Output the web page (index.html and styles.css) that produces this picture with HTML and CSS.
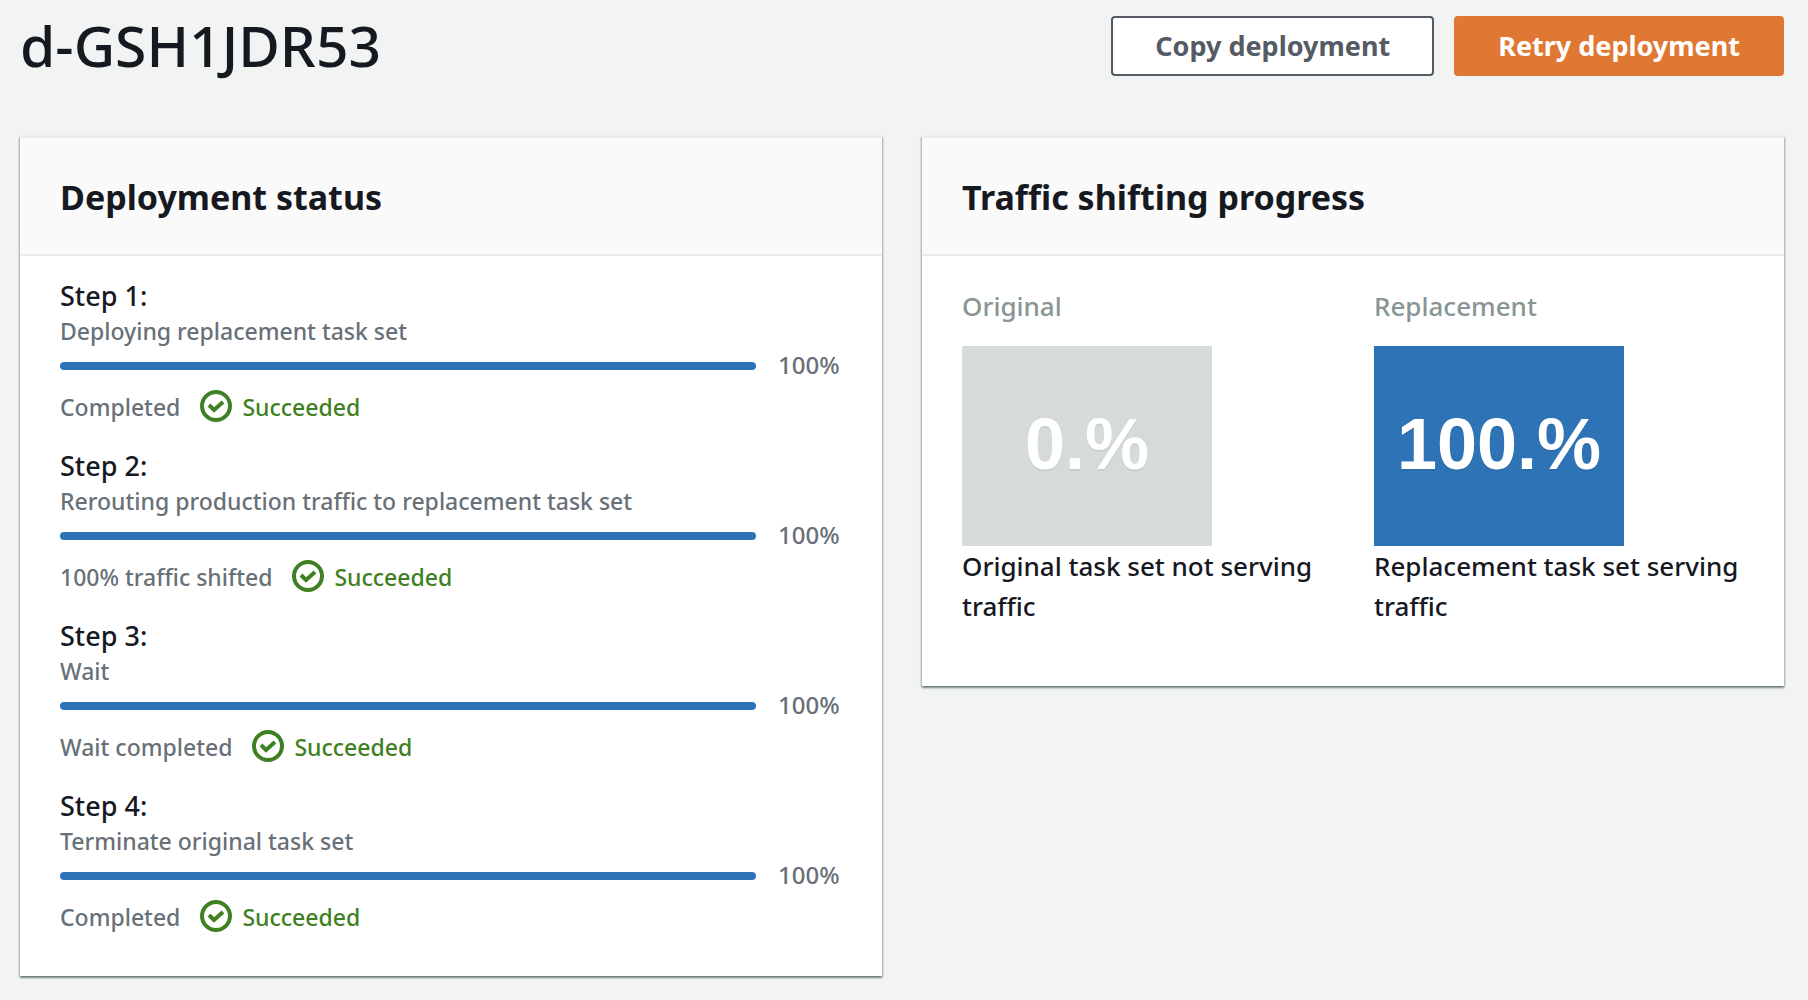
FILE: index.html
```html
<!DOCTYPE html>
<html lang="en">
<head>
<meta charset="utf-8">
<meta name="viewport" content="width=device-width, initial-scale=1">
<title>d-GSH1JDR53</title>
<link rel="stylesheet" href="styles.css">
</head>
<body>
<svg class="sprite" aria-hidden="true">
  <symbol id="icon-success" viewBox="0 0 32 32">
    <circle cx="16" cy="16" r="14" fill="none" stroke="currentColor" stroke-width="4"/>
    <path d="M9 15l5 5 9-8" fill="none" stroke="currentColor" stroke-width="4"/>
  </symbol>
</svg>
<main class="page">
  <header class="page-header">
    <h1 class="page-title">d-GSH1JDR53</h1>
    <div class="actions">
      <button class="button" type="button">Copy deployment</button>
      <button class="button button-primary" type="button">Retry deployment</button>
    </div>
  </header>
  <div class="cards">
    <section class="card">
      <header class="card-header"><h2 class="card-title">Deployment status</h2></header>
      <div class="card-body">
        <div class="step">
          <h3 class="step-title">Step 1:</h3>
          <label class="step-name" for="step-1">Deploying replacement task set</label>
          <div class="step-progress"><progress class="bar" id="step-1" value="100" max="100"></progress><span class="percent">100%</span></div>
          <div class="step-status"><span>Completed</span><span class="success"><svg class="icon" aria-hidden="true"><use href="#icon-success"/></svg>Succeeded</span></div>
        </div>
        <div class="step">
          <h3 class="step-title">Step 2:</h3>
          <label class="step-name" for="step-2">Rerouting production traffic to replacement task set</label>
          <div class="step-progress"><progress class="bar" id="step-2" value="100" max="100"></progress><span class="percent">100%</span></div>
          <div class="step-status"><span>100% traffic shifted</span><span class="success"><svg class="icon" aria-hidden="true"><use href="#icon-success"/></svg>Succeeded</span></div>
        </div>
        <div class="step">
          <h3 class="step-title">Step 3:</h3>
          <label class="step-name" for="step-3">Wait</label>
          <div class="step-progress"><progress class="bar" id="step-3" value="100" max="100"></progress><span class="percent">100%</span></div>
          <div class="step-status"><span>Wait completed</span><span class="success"><svg class="icon" aria-hidden="true"><use href="#icon-success"/></svg>Succeeded</span></div>
        </div>
        <div class="step">
          <h3 class="step-title">Step 4:</h3>
          <label class="step-name" for="step-4">Terminate original task set</label>
          <div class="step-progress"><progress class="bar" id="step-4" value="100" max="100"></progress><span class="percent">100%</span></div>
          <div class="step-status"><span>Completed</span><span class="success"><svg class="icon" aria-hidden="true"><use href="#icon-success"/></svg>Succeeded</span></div>
        </div>
      </div>
    </section>
    <section class="card">
      <header class="card-header"><h2 class="card-title">Traffic shifting progress</h2></header>
      <div class="card-body traffic">
        <div>
          <h3 class="traffic-label">Original</h3>
          <div class="tile">0.%</div>
          <p class="traffic-note">Original task set not serving traffic</p>
        </div>
        <div>
          <h3 class="traffic-label">Replacement</h3>
          <div class="tile tile-active">100.%</div>
          <p class="traffic-note">Replacement task set serving traffic</p>
        </div>
      </div>
    </section>
  </div>
</main>
</body>
</html>
```

FILE: styles.css
```css
* { box-sizing: border-box; }

body {
  margin: 0;
  background: #f2f4f3;
  color: #16191f;
  font-family: "Noto Sans", "Open Sans", sans-serif;
  font-size: 27px;
  font-weight: 500;
  line-height: 40px;
}

h1, h2, h3, p { margin: 0; }

.sprite { display: none; }

.page { padding: 16px 24px 24px 20px; }

.page-header {
  display: flex;
  justify-content: space-between;
  align-items: flex-start;
  margin-bottom: 60px;
}

.page-title {
  font-size: 57px;
  font-weight: 500;
  line-height: 58px;
}

.actions { display: flex; gap: 20px; }

.button {
  height: 60px;
  padding: 0 42px;
  border: 2px solid #545b64;
  border-radius: 4px;
  background: #fff;
  color: #545b64;
  font: 700 27px/40px "Noto Sans", "Open Sans", sans-serif;
}

.button-primary {
  border-color: #df7832;
  background: #df7832;
  color: #fff;
}

.cards {
  display: grid;
  grid-template-columns: 1fr 1fr;
  align-items: start;
  gap: 40px;
}

.card {
  border-top: 2px solid #eaeded;
  background: #fff;
  box-shadow: 0 2px 2px rgba(0, 28, 36, 0.4), 1px 1px 2px rgba(0, 28, 36, 0.2), -1px 1px 2px rgba(0, 28, 36, 0.2);
}

.card-header {
  padding: 36px 40px 34px;
  border-bottom: 2px solid #eaeded;
  background: #fafafa;
}

.card-title {
  font-size: 34px;
  font-weight: 700;
  line-height: 46px;
}

.card-body { padding: 20px 40px; }

.step { margin-bottom: 24px; }

.step-title {
  font-size: 27px;
  font-weight: 500;
  line-height: 40px;
}

.step-name {
  display: block;
  color: #687078;
  font-size: 23px;
  line-height: 30px;
}

.step-progress {
  display: flex;
  align-items: center;
  gap: 22px;
  height: 40px;
  margin-bottom: 4px;
}

.bar {
  flex: 1;
  min-width: 0;
  height: 8px;
  border: 0;
  border-radius: 4px;
  overflow: hidden;
  background: #eaeded;
  appearance: none;
}

.bar::-webkit-progress-bar { background: #eaeded; }
.bar::-webkit-progress-value { background: #2e73b5; }
.bar::-moz-progress-bar { background: #2e73b5; }

.percent {
  width: 64px;
  padding-bottom: 2px;
  color: #687078;
  font-size: 24px;
  line-height: 36px;
  white-space: nowrap;
}

.step-status {
  display: flex;
  gap: 20px;
  height: 32px;
  color: #687078;
  font-size: 23px;
  line-height: 34px;
}

.success {
  display: flex;
  gap: 10px;
  color: #3f8022;
}

.icon { width: 32px; height: 32px; }

.traffic {
  display: grid;
  grid-template-columns: 1fr 1fr;
  gap: 42px;
  padding: 30px 40px 60px;
}

.traffic-label {
  margin-bottom: 20px;
  color: #879596;
  font-size: 26px;
  font-weight: 500;
}

.traffic-note { font-size: 26px; }

.tile {
  display: flex;
  align-items: center;
  justify-content: center;
  width: 250px;
  height: 200px;
  padding-bottom: 4px;
  background: #d5dbdb;
  color: #fff;
  font: 700 72px/80px "Liberation Sans", Arial, sans-serif;
  text-shadow: 0 2px 0 rgba(0, 0, 0, 0.06);
}

.tile-active { background: #2e73b5; }
```
